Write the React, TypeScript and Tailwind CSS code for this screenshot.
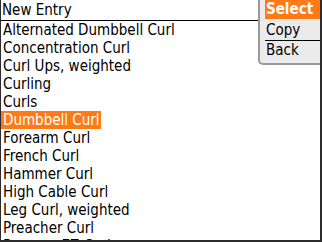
import React from "react";

const items = [
  "Alternated Dumbbell Curl",
  "Concentration Curl",
  "Curl Ups, weighted",
  "Curling",
  "Curls",
  "Dumbbell Curl",
  "Forearm Curl",
  "French Curl",
  "Hammer Curl",
  "High Cable Curl",
  "Leg Curl, weighted",
  "Preacher Curl",
  "Reverse EZ Curl",
];

export default function App() {
  return (
    <div
      className="relative w-[322px] h-[242px] overflow-hidden bg-white border-l border-r-2 border-b-2 border-[#2b2b2b] text-black text-[15px]"
      style={{ fontFamily: '"DejaVu Sans Condensed", "Liberation Sans", Arial, sans-serif' }}
    >
      <div className="h-[21px] border-b border-black pl-[1px] leading-[20px]">New Entry</div>
      <div className="flex flex-col">
        {items.map((t) => (
          <div key={t} className="h-[18px] leading-[18px] flex">
            {t === "Dumbbell Curl" ? (
              <span className="bg-[#ff7a17] text-white pl-[2px] pr-[1px]">{t}</span>
            ) : (
              <span className="pl-[2px]">{t}</span>
            )}
          </div>
        ))}
      </div>
      <div className="absolute top-0 right-0 w-[62px] bg-[#ebebeb] border-l-2 border-b-2 border-[#9a9a9a] rounded-bl-[5px] pl-[5px] pb-[3px] flex flex-col">
        <div className="h-[19px] leading-[19px] bg-[#ff7a17] text-white font-bold pl-[1px]">Select</div>
        <div className="h-[22px] leading-[22px] pl-[1px] border-b border-black">Copy</div>
        <div className="h-[19px] leading-[19px] pl-[1px]">Back</div>
      </div>
    </div>
  );
}
